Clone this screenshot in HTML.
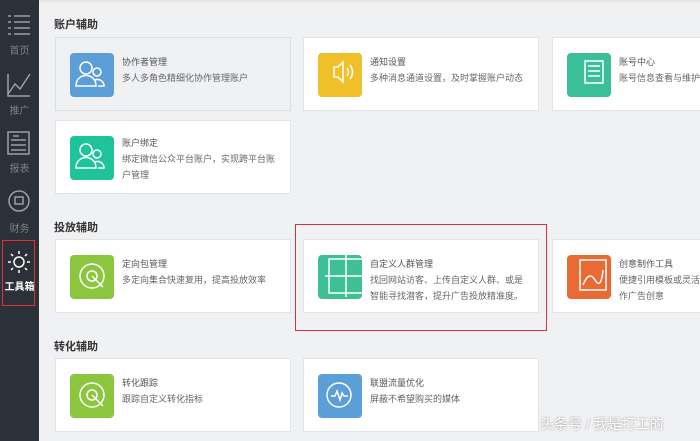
<!DOCTYPE html><html><head><meta charset="utf-8"><style>
body{margin:0;width:700px;height:441px;overflow:hidden;background:#f0f1f3;font-family:"Liberation Sans","Noto Sans CJK SC",sans-serif;position:relative}
.sb{position:absolute;left:0;top:0;width:39px;height:441px;background:#2c3038}
.sb .it{position:absolute;left:0;width:39px;text-align:center;color:#7d828b;font-size:10px}
.h{position:absolute;left:54px;font-size:11px;font-weight:bold;color:#333}
.c{position:absolute;width:236px;height:74px;background:#fff;border:1px solid #e2e4e7;box-sizing:border-box;overflow:hidden}
.ic{position:absolute;left:14px;top:15px;width:44px;height:44px;border-radius:4px}
.t{position:absolute;left:66px;top:16px;font-size:9px;line-height:16px;color:#666;white-space:nowrap}
.t b{font-weight:normal;color:#555}
</style></head><body>
<div class="sb">
<svg width="39" height="300" style="position:absolute;left:0;top:0" fill="none" stroke="#9aa0a8" stroke-width="1.5">
<path d="M8 16h3M14 16h16M8 22h3M14 22h16M8 28h3M14 28h16M8 34h3M14 34h16"/>
<path d="M8 74v22h22M8 94l7-10 5 5 10-15"/>
<rect x="8" y="132" width="21" height="22"/><path d="M11 140h15M11 145h15M11 150h15M13 136h6"/>
<circle cx="19" cy="201" r="10"/><rect x="15" y="197" width="8" height="7"/>
<circle cx="19" cy="262" r="5" stroke="#fff"/><path stroke="#fff" d="M19 251v3M19 270v3M8 262h3M27 262h3M11 254l2 2M27 254l-2 2M11 270l2-2M27 270l-2-2"/>
</svg>
<div class="it" style="top:42px">首页</div>
<div class="it" style="top:102px">推广</div>
<div class="it" style="top:160px">报表</div>
<div class="it" style="top:220px">财务</div>
<div class="it" style="top:278px;color:#fff;font-weight:bold">工具箱</div>
<div style="position:absolute;left:2px;top:240px;width:33px;height:66px;border:1px solid #e03030;box-sizing:border-box"></div>
</div>
<div style="position:absolute;left:39px;top:0;width:661px;height:2px;background:#e9e4dd"></div>
<div class="h" style="top:16px">账户辅助</div>
<div class="c" style="left:55px;top:37px;background:#f0f1f3;border-color:#dcdee2"><div class="ic" style="background:#5b9ed8"></div><div class="t"><b>协作者管理</b><br>多人多角色精细化协作管理账户</div></div>
<div class="c" style="left:303px;top:37px"><div class="ic" style="background:#f0c02b"></div><div class="t"><b>通知设置</b><br>多种消息通道设置，及时掌握账户动态</div></div>
<div class="c" style="left:552px;top:37px;width:148px;border-right:none"><div class="ic" style="background:#3bbf9a"></div><div class="t"><b>账号中心</b><br>账号信息查看与维护</div></div>
<div class="c" style="left:55px;top:120px"><div class="ic" style="background:#1fc39a"></div><div class="t" style="top:14px"><b>账户绑定</b><br>绑定微信公众平台账户，实现跨平台账<br>户管理</div></div>
<div class="h" style="top:219px">投放辅助</div>
<div class="c" style="left:55px;top:239px"><div class="ic" style="background:#8cc63e"></div><div class="t"><b>定向包管理</b><br>多定向集合快速复用，提高投放效率</div></div>
<div class="c" style="left:303px;top:239px"><div class="ic" style="background:#3fbf95"></div><div class="t"><b>自定义人群管理</b><br>找回网站访客、上传自定义人群、或是<br>智能寻找潜客，提升广告投放精准度。</div></div>
<div style="position:absolute;left:295px;top:224px;width:252px;height:107px;border:1px solid #d9323f;box-sizing:border-box"></div>
<div class="c" style="left:552px;top:239px;width:148px;border-right:none"><div class="ic" style="background:#ea6a34"></div><div class="t"><b>创意制作工具</b><br>便捷引用模板或灵活<br>作广告创意</div></div>
<div class="h" style="top:338px">转化辅助</div>
<div class="c" style="left:55px;top:358px"><div class="ic" style="background:#8cc63e"></div><div class="t"><b>转化跟踪</b><br>跟踪自定义转化指标</div></div>
<div class="c" style="left:303px;top:358px"><div class="ic" style="background:#5b9ed8"></div><div class="t"><b>联盟流量优化</b><br>屏蔽不希望购买的媒体</div></div>
<div style="position:absolute;left:540px;top:414px;font-size:14px;color:#fff;text-shadow:0 0 2px #888">头条号 / 我是打工的</div>
<svg width="700" height="441" style="position:absolute;left:0;top:0" fill="none" stroke="#fff" stroke-width="1.5">
<circle cx="86" cy="68" r="6"/><path d="M76 86c0-14 20-14 20 0z"/><circle cx="97" cy="72" r="4"/><path d="M95 80c5-2 9 2 9 6h-6"/>
<path d="M334 67h4l5-5v20l-5-5h-4zM347 68q3 4 0 8M350 65q5 7 0 14"/>
<path d="M585 61h18v22h-18zM588 66h12M588 71h12M588 76h12"/>
<circle cx="86" cy="150" r="6"/><path d="M76 168c0-14 20-14 20 0z"/><circle cx="97" cy="154" r="4"/><path d="M95 162c5-2 9 2 9 6h-6"/>
<circle cx="92" cy="276" r="12"/><circle cx="92" cy="276" r="5"/><path d="M92 276l11 11"/>
<path d="M329 259h34v34h-34zM346 255v42M325 276h42"/>
<path d="M580 260h26v30h-26zM583 285q6-15 12-5t8-10"/>
<circle cx="92" cy="395" r="12"/><circle cx="92" cy="395" r="5"/><path d="M92 395l11 11"/>
<circle cx="339" cy="395" r="12"/><path d="M331 396h4l2-5 3 9 2-7 2 3h4"/>
</svg>
</body></html>
